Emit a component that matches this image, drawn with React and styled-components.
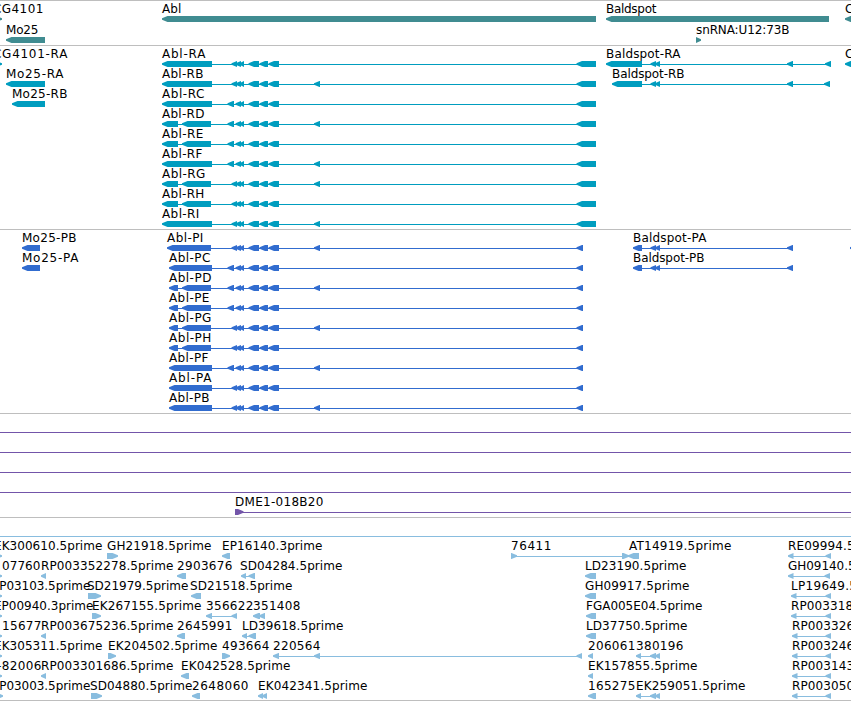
import React from "react";
import styled, { createGlobalStyle } from "styled-components";

const LINE_Y = 3;
const HEAD = 5.5;

// exon: [start, end], feature: { name, x, w, exons, dir }
const core = (first) => [
	first === 228 ? [227.5, 234] : [231.5, 237],
	[235.5, 241],
	[239.5, 244],
	[248.5, 259],
	[259.5, 268],
	[268.5, 279],
];

const abl = (name, w, tip, { split, first = 232, mid, last, x }) => ({
	name,
	x: x || tip,
	w,
	exons: [
		...(split ? [[tip, 178], [182, 211]] : [[tip, tip === 167 ? 211 : 212]]),
		...core(first),
		...(mid ? [[314, 320]] : []),
		last,
	],
});

const rna = (name, w, options) => abl(name, w, 162, { ...options, last: [576.5, 596] });
const protein = (name, w, options, tip = 169) =>
	abl(name, w, tip, { ...options, last: [576.5, 583] });

const genes = [
	[
		{ name: "CG4101", x: -7, w: 51, dir: "right", exons: [[-8, 2]] },
		{ name: "Abl", x: 162, w: 20, exons: [[162, 596]] },
		{ name: "Baldspot", x: 606, w: 51, exons: [[606, 829]] },
		{ name: "CG32159", x: 845, w: 56, exons: [[845, 870]] },
	],
	[
		{ name: "Mo25", x: 6, w: 33, exons: [[6, 45]] },
		{ name: "snRNA:U12:73B", x: 696, w: 94, dir: "right", exons: [[696, 701]] },
	],
];

const transcripts = [
	[
		{ name: "CG4101-RA", x: -7, w: 75, dir: "right", exons: [[-8, 2]] },
		rna("Abl-RA", 44, {}),
		{
			name: "Baldspot-RA",
			x: 606,
			w: 75,
			exons: [[606, 642], [650.5, 656], [655, 660], [787, 793], [825, 831]],
		},
		{ name: "CG32159-RA", x: 845, w: 80, exons: [[845, 870]] },
	],
	[
		{ name: "Mo25-RA", x: 6, w: 58, exons: [[6, 45]] },
		rna("Abl-RB", 42, { mid: true }),
		{
			name: "Baldspot-RB",
			x: 612,
			w: 73,
			exons: [[612, 642], [650.5, 656], [655, 660], [787, 793], [824, 830]],
		},
	],
	[
		{ name: "Mo25-RB", x: 12, w: 56, exons: [[12, 45]] },
		rna("Abl-RC", 43, { first: 228 }),
	],
	[rna("Abl-RD", 43, { first: 228, mid: true, split: true })],
	[rna("Abl-RE", 42, { first: 228, split: true })],
	[rna("Abl-RF", 41, { first: 228, mid: true })],
	[rna("Abl-RG", 44, { mid: true, split: true })],
	[rna("Abl-RH", 43, { split: true })],
	[rna("Abl-RI", 38, { mid: true })],
];

const proteins = [
	[
		{ name: "Mo25-PB", x: 22, w: 55, exons: [[22, 40]] },
		protein("Abl-PI", 37, { mid: true }, 167),
		{
			name: "Baldspot-PA",
			x: 633,
			w: 74,
			exons: [[633, 642], [650.5, 656], [655, 660], [787, 793]],
		},
		{ exons: [[850, 870]] },
	],
	[
		{ name: "Mo25-PA", x: 22, w: 57, exons: [[22, 40]] },
		protein("Abl-PC", 42, { first: 228 }),
		{
			name: "Baldspot-PB",
			x: 633,
			w: 72,
			exons: [[633, 642], [650.5, 656], [655, 660], [787, 793]],
		},
	],
	[protein("Abl-PD", 43, { first: 228, mid: true, split: true })],
	[protein("Abl-PE", 41, { first: 228, split: true })],
	[protein("Abl-PG", 43, { mid: true, split: true })],
	[protein("Abl-PH", 43, { split: true })],
	[protein("Abl-PF", 40, { first: 228, mid: true })],
	[protein("Abl-PA", 43, {})],
	[protein("Abl-PB", 41, { mid: true })],
];

const wholeSpan = { exons: [[-20, -10], [870, 880]] };

const clones = [
	[wholeSpan],
	[wholeSpan],
	[wholeSpan],
	[wholeSpan],
	[{ name: "DME1-018B20", x: 235, w: 89, dir: "right", exons: [[235, 243.5], [870, 880]] }],
];

const est = (name, x, w, exons, dir) => ({ name, x, w, exons, dir });
const edge = (name, x, w, end = 2) => est(name, x, w, [[-8, end]], "right");
const pair = (name, x, end = 831) =>
	est(name, x, name.length > 14 ? 110 : 103, [[x, x + 5.5], [end - 5.5, end]]);

const ests = [
	[wholeSpan],
	[
		edge("EK300610.5prime", -6, 109),
		est("GH21918.5prime", 107, 105, [[107, 118]], "right"),
		est("EP16140.3prime", 222, 101, [[222, 230]]),
		est("76411", 511, 41, [[511, 517], [622, 629]], "right"),
		est("AT14919.5prime", 629, 103, [[628, 639]]),
		pair("RE09994.5prime", 788),
	],
	[
		edge("07760", 2, 39),
		est("RP003352278.5prime", 41, 133, [[41, 46]]),
		est("2903676", 177, 56, [[177, 186]]),
		est("SD04284.5prime", 240, 103, [[241, 246], [248.5, 255]]),
		est("LD23190.5prime", 585, 102, [[585, 596]]),
		pair("GH09140.5prime", 788, 830),
	],
	[
		edge("RP03103.5prime", -9, 100),
		est("SD21979.5prime", 87, 102, [[88, 101]], "right"),
		est("SD21518.5prime", 190, 103, [[191, 201]]),
		est("GH09917.5prime", 585, 105, [[585, 596]]),
		pair("LP19649.5prime", 791),
	],
	[
		edge("EP00940.3prime", -6, 100),
		est("EK267155.5prime", 92, 110, [[92, 101]], "right"),
		est("356622", 206, 48, [[206, 212], [231.5, 237]]),
		est("351408", 253, 48, [[253, 260], [259, 265]]),
		est("FGA005E04.5prime", 586, 117, [[586, 596]]),
		pair("RP003318.5prime", 791),
	],
	[
		edge("15677", 2, 40),
		est("RP003675236.5prime", 41, 133, [[41, 46]]),
		est("2645991", 177, 56, [[177, 185]]),
		est("LD39618.5prime", 242, 102, [[242, 247], [248.5, 256]]),
		est("LD37750.5prime", 586, 102, [[586, 596]]),
		pair("RP003326.5prime", 792),
	],
	[
		edge("EK305311.5prime", -6, 109),
		est("EK204502.5prime", 108, 110, [[108, 116]], "right"),
		est("493664", 222, 48, [[222, 230]], "right"),
		est("220564", 273, 48, [[273, 279], [314, 320], [576.5, 582]]),
		est("206061", 588, 48, [[588, 593]]),
		est("380196", 636, 48, [[636, 641], [650, 656], [655, 660]]),
		pair("RP003246.5prime", 792),
	],
	[
		edge("-82006", -3, 45),
		est("RP003301686.5prime", 41, 133, [[41, 46]]),
		est("EK042528.5prime", 181, 110, [[181, 189]]),
		est("EK157855.5prime", 588, 110, [[588, 593]]),
		pair("RP003143.5prime", 792),
	],
	[
		edge("RP03003.5prime", -9, 100, 3),
		est("SD04880.5prime", 90, 103, [[91, 102]], "right"),
		est("2648060", 192, 57, [[192, 200]]),
		est("EK042341.5prime", 258, 110, [[258, 263], [262, 267]]),
		est("165275", 588, 48, [[588, 596]]),
		est("EK259051.5prime", 636, 110, [[636, 641], [650, 656], [655, 660]]),
		pair("RP003050.5prime", 792),
	],
];

const tracks = [
	{ id: "genes", color: "#408c91", gap: 1, rows: genes },
	{ id: "transcripts", color: "#009dbf", rows: transcripts },
	{ id: "proteins", color: "#316ccf", rows: proteins },
	{ id: "clones", color: "#7355a9", rows: clones },
	{ id: "ests", color: "#89bddf", rows: ests },
];

const arrowPoints = ([start, end], dir) => {
	const head = Math.min(HEAD, end - start);
	if (dir === "right") {
		return `${start},0 ${end - head},0 ${end},2.2 ${end},3.8 ${end - head},6 ${start},6`;
	}
	return `${end},0 ${start + head},0 ${start},2.2 ${start},3.8 ${start + head},6 ${end},6`;
};

const Feature = ({ feature }) => {
	const { name, x, w, exons, dir } = feature;
	const start = exons[0][0];
	const end = exons[exons.length - 1][1];
	return (
		<g>
			{name && (
				<Name x={x} y="11" textLength={w - 0.6}>
					{name}
				</Name>
			)}
			<g transform="translate(0 14)">
				{exons.length > 1 && <rect x={start + 2} y={LINE_Y} width={end - start - 4} height="1" />}
				{exons.map((exon) => (
					<polygon key={exon[0]} points={arrowPoints(exon, dir)} />
				))}
			</g>
		</g>
	);
};

const App = () => {
	return (
		<>
			<GlobalStyle />
			<Browser>
				{tracks.map((track) => (
					<Track key={track.id} $gap={track.gap}>
						{track.rows.map((row, i) => (
							<Row key={i} $color={track.color} viewBox="0 0 851 20">
								{row.map((feature, j) => (
									<Feature key={j} feature={feature} />
								))}
							</Row>
						))}
					</Track>
				))}
			</Browser>
		</>
	);
};

const GlobalStyle = createGlobalStyle`
	body {
		margin: 0;
		background: #fff;
		overflow: hidden;
	}
`;

const Browser = styled.main`
	width: 851px;
	height: 701px;
	box-sizing: border-box;
	display: flex;
	flex-direction: column;
	overflow: hidden;
	border-bottom: 1px solid #bebebe;
`;

const Track = styled.section`
	display: flex;
	flex-direction: column;
	flex-shrink: 0;
	gap: ${({ $gap }) => $gap || 0}px;
	padding: 1px 0 2px;
	border-top: 1px solid #bebebe;

	&:last-child {
		padding-bottom: 1px;
	}
`;

const Row = styled.svg`
	display: block;
	flex-shrink: 0;
	width: 851px;
	height: 20px;
	fill: ${({ $color }) => $color};
`;

const Name = styled.text`
	font-family: "DejaVu Sans", sans-serif;
	font-size: 12px;
	fill: #000;
`;

export default App;
